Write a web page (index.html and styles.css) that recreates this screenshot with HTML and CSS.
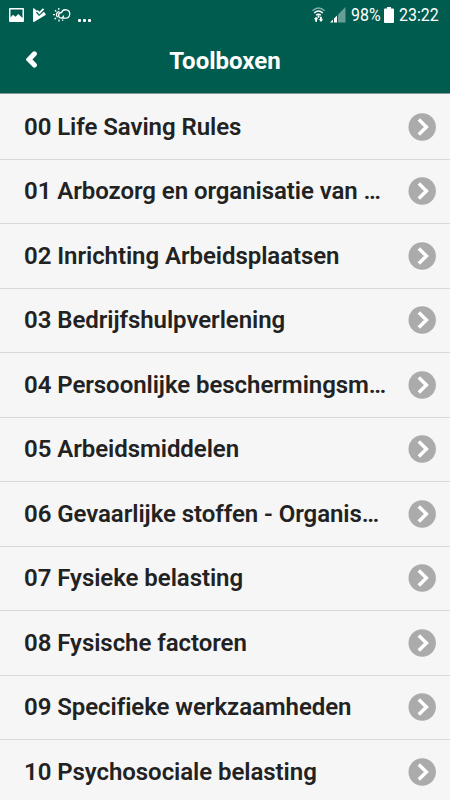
FILE: index.html
```
<!DOCTYPE html>
<html lang="nl">
<head>
  <meta charset="UTF-8" />
  <meta name="viewport" content="width=device-width, initial-scale=1.0"/>
  <title>Toolboxen</title>
  <link rel="stylesheet" href="styles.css">
</head>
<body>
  <svg class="sprite" aria-hidden="true">
    <symbol id="arrow" viewBox="0 0 28 28">
      <circle cx="14.2" cy="14" r="13.7" fill="#ababab"/>
      <path d="M10.800 6.400L18.400 14l-7.600 7.600" fill="none" stroke="#fff" stroke-width="3.500"/>
    </symbol>
  </svg>

  <header class="header">
    <div class="status-bar">
      <div class="status-left">
        <svg width="15" height="15" viewBox="0 0 15 15">
          <path fill="#fff" fill-rule="evenodd" d="M1 0h13q1 0 1 1v12q0 1-1 1H1q-1 0-1-1V1q0-1 1-1zM1.500 1.500V9.500L4 6.800l2.500 2L9.300 6l4.200 4V1.500z"/>
        </svg>
        <svg width="13" height="15" viewBox="0 0 13 15">
          <path fill="#fff" d="M0 .5L1 .3 4.400 3.200 3 4.600 6 8 11 3.800 13 6.700 1 14 0 13.500z"/>
          <path d="M4.200 2.700L6.400 5.200 10.500.8" fill="none" stroke="#fff" stroke-width="1.800"/>
        </svg>
        <svg class="weather" width="18" height="15" viewBox="0 0 18 15" fill="none" stroke="#fff" stroke-width="1.300">
          <path d="M9 10.200H12.500A4.200 4.200 0 1 0 8.600 4.500A2.800 2.800 0 0 0 8.300 10.100Q10.500 9.800 10.500 7.500"/>
          <path d="M6.300 3.300A3.400 3.400 0 0 0 4.700 9.300"/>
          <path d="M5.800 0v1.800M2 2.300l1.300 1.200M0 6.600h2M1.600 11.300l1.400-1.400M6 11.400v2M9.300 11.500l.8 1.200"/>
        </svg>
        <span class="dots"><i></i><i></i><i></i></span>
      </div>
      <div class="status-right">
        <svg width="13" height="16" viewBox="0 0 13 16" fill="none" stroke="#fff">
          <path d="M.4 3.800Q6.500-1.800 12.600 3.800" stroke-width="1.500" opacity=".5"/>
          <path d="M2.200 6.100Q6.500 2.100 10.800 6.100M4.100 8.300Q6.500 6.100 8.900 8.300" stroke-width="1.400"/>
          <path d="M6.500 8.300v2.400" stroke-width="1.800"/>
          <path fill="#fff" stroke="none" d="M1.800 12.200L4.100 9.700l2.300 2.500H5v2.600H3.200v-2.600zM6.700 12.200H8V9.700h1.800v2.500h1.400L9 14.900z"/>
        </svg>
        <svg class="signal" width="16" height="16" viewBox="0 0 16 16" fill="#fff">
          <path opacity=".4" d="M8 7.500L15.500 0v15.500H8z"/>
          <path d="M0 15.500L3 12.500v3zM4 11.500L7 8.500v7H4z"/>
        </svg>
        <span class="battery-text">98%</span>
        <svg class="battery" width="10" height="16" viewBox="0 0 10 16">
          <path fill="#fff" d="M3 0h4v1.500h2q1 0 1 1V15q0 1-1 1H1q-1 0-1-1V2.500q0-1 1-1h2z"/>
        </svg>
        <span class="clock">23:22</span>
      </div>
    </div>
    <div class="title-bar">
      <a class="back" href="#" aria-label="Terug">
        <svg width="12" height="17" viewBox="0 0 12 17">
          <path d="M8.400 2.800L3 8.500l5.400 5.500" fill="none" stroke="#fff" stroke-width="5" stroke-linecap="round"/>
        </svg>
      </a>
      <h1>Toolboxen</h1>
    </div>
  </header>

  <ul class="list">
    <li><a href="#"><span>00 Life Saving Rules</span><svg class="arrow"><use href="#arrow"/></svg></a></li>
    <li><a href="#"><span>01 Arbozorg en organisatie van …</span><svg class="arrow"><use href="#arrow"/></svg></a></li>
    <li><a href="#"><span>02 Inrichting Arbeidsplaatsen</span><svg class="arrow"><use href="#arrow"/></svg></a></li>
    <li><a href="#"><span>03 Bedrijfshulpverlening</span><svg class="arrow"><use href="#arrow"/></svg></a></li>
    <li><a href="#"><span>04 Persoonlijke beschermingsm…</span><svg class="arrow"><use href="#arrow"/></svg></a></li>
    <li><a href="#"><span>05 Arbeidsmiddelen</span><svg class="arrow"><use href="#arrow"/></svg></a></li>
    <li><a href="#"><span>06 Gevaarlijke stoffen - Organis…</span><svg class="arrow"><use href="#arrow"/></svg></a></li>
    <li><a href="#"><span>07 Fysieke belasting</span><svg class="arrow"><use href="#arrow"/></svg></a></li>
    <li><a href="#"><span>08 Fysische factoren</span><svg class="arrow"><use href="#arrow"/></svg></a></li>
    <li><a href="#"><span>09 Specifieke werkzaamheden</span><svg class="arrow"><use href="#arrow"/></svg></a></li>
    <li><a href="#"><span>10 Psychosociale belasting</span><svg class="arrow"><use href="#arrow"/></svg></a></li>
  </ul>
</body>
</html>
```
FILE: styles.css
```
* {
  box-sizing: border-box;
}

body {
  margin: 0;
  height: 100vh;
  overflow: hidden;
  background-color: #f6f6f6;
  font-family: Roboto, "Liberation Sans", sans-serif;
}

svg {
  display: block;
  flex: none;
}

.sprite {
  display: none;
}

.header {
  height: 94px;
  background-color: #005c4f;
  border-bottom: 1px solid #8a9a97;
  color: white;
}

.status-bar {
  display: flex;
  justify-content: space-between;
  height: 30px;
  padding: 0 10px 0 9px;
}

.status-left,
.status-right {
  display: flex;
  align-items: center;
}

.status-left {
  gap: 9px;
}

.weather {
  margin-left: -2px;
}

.dots {
  display: flex;
  gap: 2px;
  margin: 11px 0 0 -2px;
}

.dots i {
  width: 3px;
  height: 3px;
  border-radius: 1px;
  background-color: white;
}

.signal {
  margin-left: 5px;
}

/* the status bar uses a narrow face */
.battery-text,
.clock {
  font-size: 19px;
  line-height: 30px;
  white-space: nowrap;
  transform: scaleX(0.84);
  transform-origin: left;
}

.battery-text {
  width: 30px;
  margin-left: 5px;
}

.battery {
  margin: 0 5px 0 3px;
}

.clock {
  width: 41px;
}

.title-bar {
  display: grid;
  grid-template-columns: 60px 1fr 60px;
  align-items: center;
  height: 62px;
}

.back {
  padding: 0 0 4px 26px;
}

h1 {
  margin: 0;
  font-size: 24px;
  font-weight: 700;
  line-height: 30px;
  text-align: center;
}

.list {
  margin: 0;
  padding: 1px 0 0;
  list-style: none;
}

.list li {
  height: 64.5px;
  border-bottom: 1px solid #d9d9d9;
}

.list a {
  display: flex;
  align-items: center;
  justify-content: space-between;
  height: 100%;
  padding: 0 14px 0 24px;
  color: #222;
  text-decoration: none;
}

.list span {
  font-size: 24px;
  font-weight: 600;
  letter-spacing: -0.06px;
  line-height: 32px;
  white-space: nowrap;
}

.arrow {
  width: 28px;
  height: 28px;
}
```
